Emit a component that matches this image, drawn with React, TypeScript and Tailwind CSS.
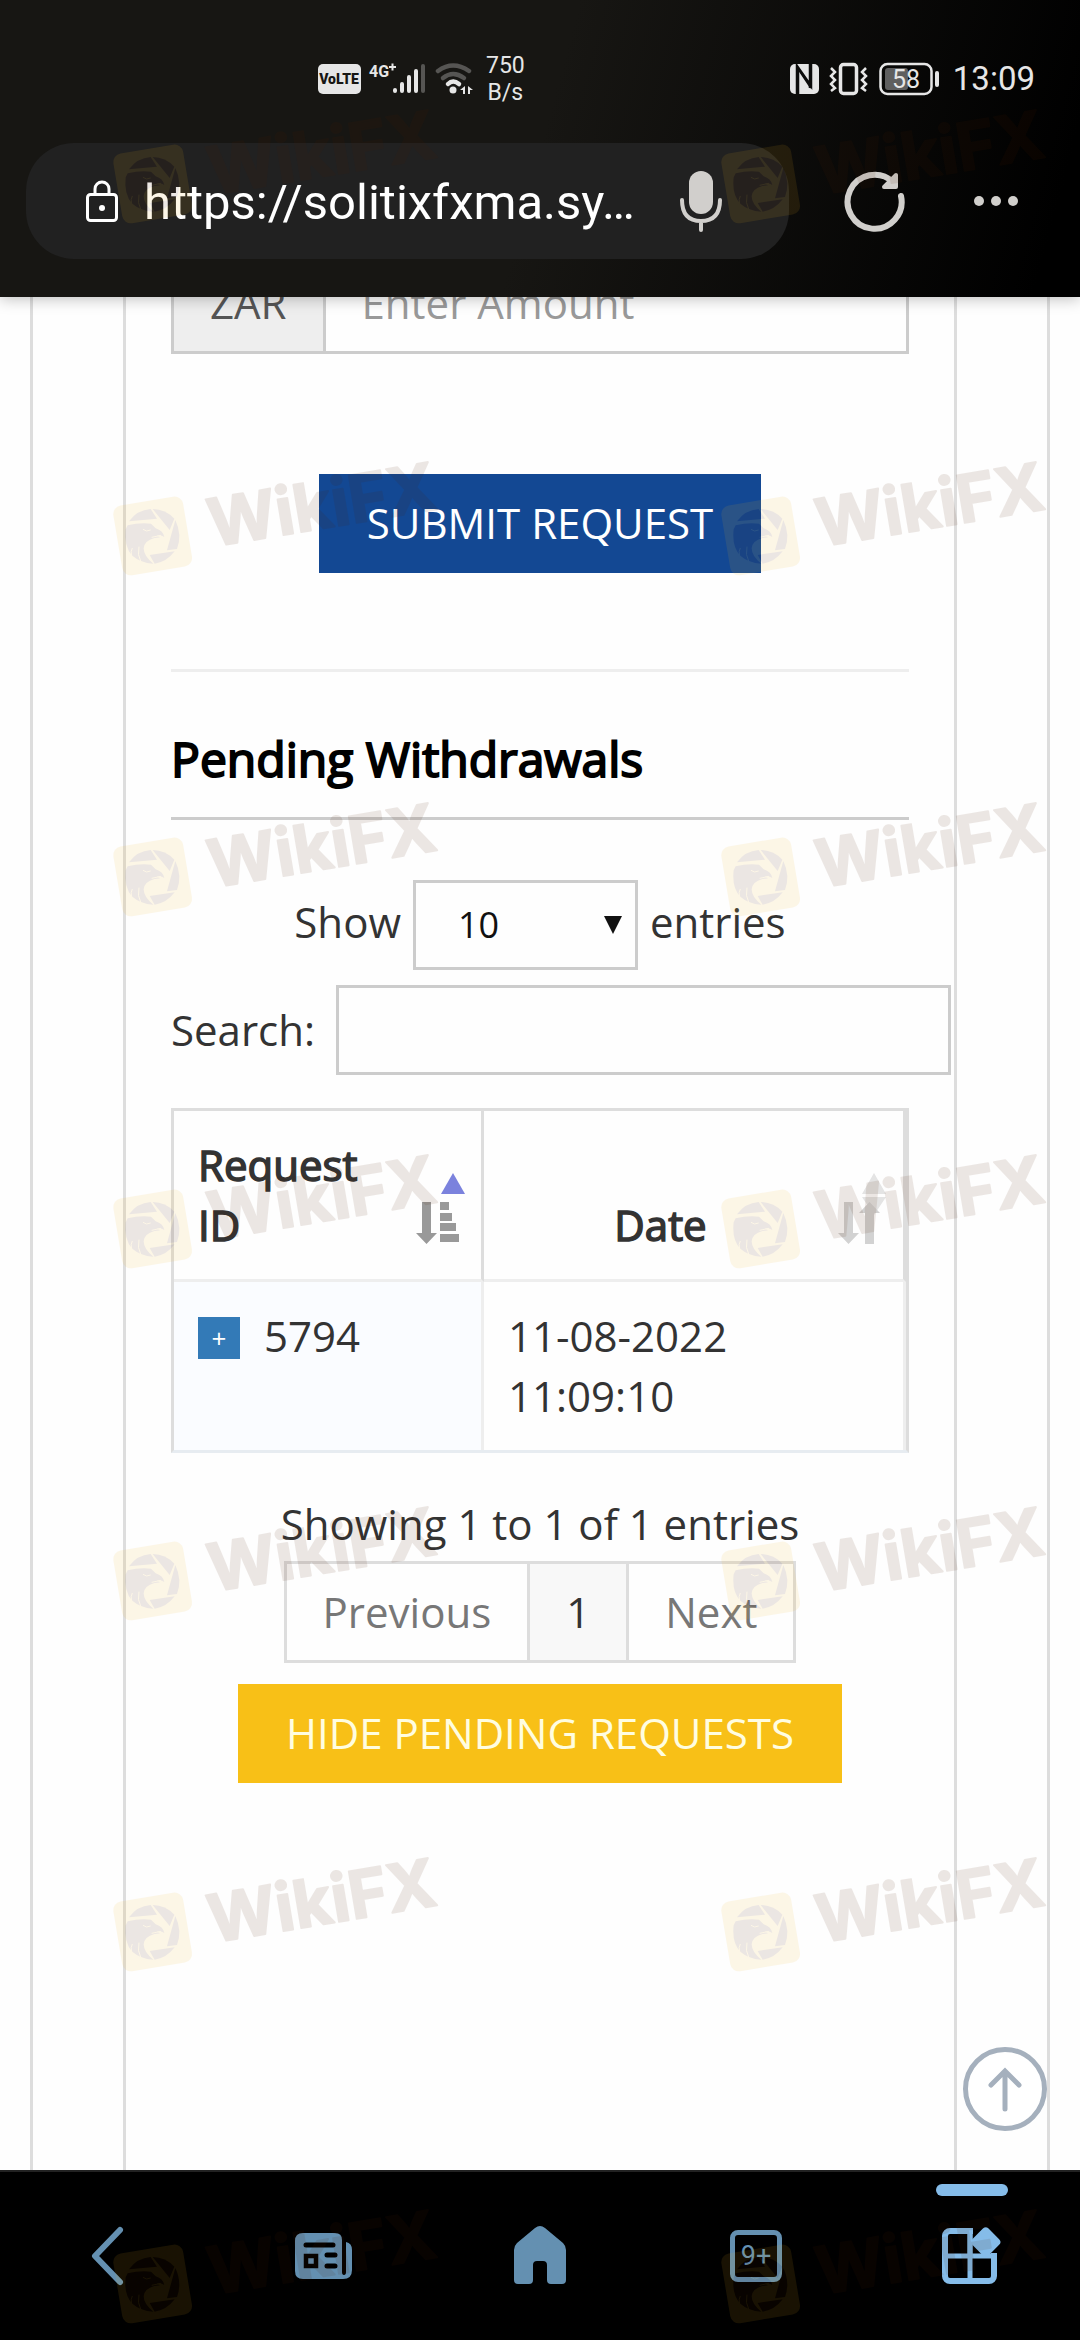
import React, { useState } from "react";

const watermarkRows = [144, 496, 837, 1189, 1541, 1892, 2244];

const Watermark = () => (
	<svg viewBox="0 0 345 130" className="w-[345px] h-[130px] overflow-visible opacity-10" aria-hidden="true">
		<g transform="translate(0 34) scale(0.3333)">
			<rect x="37" y="38" width="212" height="212" rx="26" fill="#f0b41e" transform="rotate(-9.5 143 144)" />
			<g fill="#501e00">
				<path d="M72 100 Q96 66 137 63 L156 92 Z" />
				<path d="M143 63 Q182 64 208 92 L194 126 Z" />
				<path d="M211 96 Q232 140 216 183 L186 187 Z" />
				<path d="M134 201 L209 190 Q185 222 149 227 Z" />
				<path d="M62 124 L68 112 Q104 103 138 107 L152 121 Q174 128 178 147 Q168 139 155 143 L165 148 L148 150 Q118 158 116 181 Q116 204 145 227 Q106 224 82 203 Q56 176 62 124 Z" />
			</g>
			<g fill="none" stroke="#f0b41e" strokeWidth="3">
				<path d="M114 124 Q124 133 137 126" />
				<path d="M102 176 Q96 200 108 222" />
				<path d="M82 180 Q76 190 80 204" />
				<path d="M140 148 L168 142" />
			</g>
		</g>
		<text
			x="107"
			y="93"
			transform="rotate(-9.5 107 93)"
			fill="#501e00"
			stroke="#501e00"
			strokeWidth="2"
			strokeLinejoin="round"
			className="font-[Inter,sans-serif] text-[66px] font-bold"
		>
			WikiFX
		</text>
	</svg>
);

const StatusBar = () => (
	<div className="flex items-center justify-between pl-[318px] pr-[45px] pt-[52px] h-[106px] text-[#e6e6e6] font-[Roboto,sans-serif]">
		<div className="flex items-center">
			<svg viewBox="0 0 156 34" className="w-[156px] h-[34px]">
				<rect x="0" y="2" width="43" height="30" rx="5" fill="#e6e6e6" />
				<text x="21" y="22" textAnchor="middle" fill="#171613" className="text-[14px] font-black">
					VoLTE
				</text>
				<text x="51" y="15" fill="#e6e6e6" className="text-[16px] font-bold">
					4G
				</text>
				<path d="M71 5h7M74.500 1.500v7" stroke="#e6e6e6" strokeWidth="2" />
				<g stroke="#e6e6e6" strokeWidth="4" strokeLinecap="round">
					<path d="M77 28v1M84 22v7M91 15v14M98 9v20" />
					<path d="M105 4v25" stroke="#565553" />
				</g>
				<g fill="none" strokeWidth="4.500" strokeLinecap="round">
					<path d="M120 9q15 -11 31 0" stroke="#565553" />
					<path d="M125 16q10 -8 21 0" stroke="#565553" />
					<path d="M130 22q5 -5 11 0" stroke="#e6e6e6" />
				</g>
				<circle cx="135" cy="28" r="3.500" fill="#e6e6e6" />
				<path d="M142 28l5 -4v8h-2v-4zM155 28l-5 -4v8h2v-4z" fill="#e6e6e6" />
			</svg>
			<div className="ml-3 text-center text-[23px] leading-[27px]">
				<p>750</p>
				<p>B/s</p>
			</div>
		</div>
		<div className="flex items-center">
			<svg viewBox="0 0 152 36" className="w-[152px] h-[36px]">
				<rect x="1" y="3" width="29" height="30" rx="5" fill="#e6e6e6" />
				<path d="M8 33V5l14 20V3M9 9v24M21 3v24" fill="none" stroke="#0d0d0c" strokeWidth="2.500" />
				<path d="M10 9l12 18" stroke="#0d0d0c" strokeWidth="2" />
				<rect x="51.500" y="3.500" width="16" height="29" rx="3" fill="none" stroke="#e6e6e6" strokeWidth="3.500" />
				<path
					d="M42 7l4 4l-4 4l4 4l-4 4l4 4l-4 3M77 7l-4 4l4 4l-4 4l4 4l-4 4l4 3"
					fill="none"
					stroke="#e6e6e6"
					strokeWidth="2.500"
				/>
				<rect x="91.500" y="3" width="51" height="30" rx="7" fill="none" stroke="#e6e6e6" strokeWidth="2.500" />
				<rect x="96" y="7" width="23" height="22" rx="3" fill="#5f5f5f" />
				<text x="117" y="27" textAnchor="middle" fill="#e6e6e6" className="text-[25px]">
					58
				</text>
				<path d="M148 12v12" stroke="#e6e6e6" strokeWidth="4" strokeLinecap="round" />
			</svg>
			<span className="ml-3 text-[33px] leading-[36px]">13:09</span>
		</div>
	</div>
);

const AddressBar = () => (
	<div className="flex items-center pl-[26px] pr-[61px] mt-[37px]">
		<div className="flex min-w-0 flex-1 items-center h-[116px] rounded-[48px] bg-[#212121] pl-[59px] pr-[66px]">
			<svg viewBox="0 0 34 42" className="w-[34px] h-[42px] shrink-0" fill="none" stroke="#fff" strokeWidth="3">
				<rect x="2.500" y="14.500" width="29" height="26" rx="3" />
				<path d="M10 14V9a7 7 0 0 1 14 0v5" />
				<circle cx="17" cy="28" r="3" fill="#fff" stroke="none" />
			</svg>
			<input
				aria-label="Address"
				defaultValue="https://solitixfxma.sy…"
				className="ml-[25px] min-w-0 flex-1 bg-transparent pt-1 text-white text-[49px] leading-[60px] font-[Roboto,sans-serif] outline-none"
			/>
			<button aria-label="Voice search" className="shrink-0">
				<svg viewBox="0 0 44 62" className="w-[44px] h-[62px]">
					<rect x="10" y="1" width="24" height="43" rx="12" fill="#d1cfcc" />
					<path d="M3 30q0 21 19 21t19 -21M22 51v9" fill="none" stroke="#d1cfcc" strokeWidth="4" strokeLinecap="round" />
				</svg>
			</button>
		</div>
		<button aria-label="Reload" className="ml-[55px] shrink-0">
			<svg viewBox="0 0 62 62" className="w-[62px] h-[62px]" fill="none" stroke="#d1cfcc" strokeLinecap="round" strokeLinejoin="round">
				<path d="M57 26a27 27 0 1 1 -8 -14" strokeWidth="6" />
				<path d="M52 5v12H40z" strokeWidth="4" fill="#d1cfcc" />
			</svg>
		</button>
		<button aria-label="More" className="ml-[67px] shrink-0">
			<svg viewBox="0 0 46 12" className="w-[46px] h-[12px]" fill="#d1cfcc">
				<circle cx="6" cy="6" r="5" />
				<circle cx="23" cy="6" r="5" />
				<circle cx="40" cy="6" r="5" />
			</svg>
		</button>
	</div>
);

const PendingTable = () => (
	<div className="mt-[33px] border-[3px] border-[#ddd] border-b-[#e7ecf1]">
		<table className="w-full table-fixed border-separate border-spacing-0">
			<thead>
				<tr className="[-webkit-text-stroke:1.5px]">
					<th className="relative w-[310px] h-[171px] border-r-[3px] border-r-[#ddd] border-b-[3px] border-b-[#eee] py-6 pl-6 pr-[90px] text-left align-bottom font-normal">
						Request ID
						<svg viewBox="0 0 60 80" className="absolute right-2 bottom-7 w-[60px] h-[80px]">
							<path d="M28 23L40 2L52 23z" fill="#7b82dd" />
							<g fill="#999">
								<path d="M9 31h9v31h6l-10.500 11l-10.500 -11h6z" />
								<path d="M27 31h9v8h-9zM27 42h12v8h-12zM27 52h16v8h-16zM27 63h19v8h-19z" />
							</g>
						</svg>
					</th>
					<th className="relative border-r-[3px] border-r-[#ddd] border-b-[3px] border-b-[#eee] py-6 pl-6 pr-[90px] text-center align-bottom font-normal">
						Date
						<svg viewBox="0 0 60 80" className="absolute right-2 bottom-7 w-[60px] h-[80px]">
							<path d="M27 23L39 2L51 23zM27 26h24l-12 18z" fill="#e4e4e4" />
							<g fill="#d2d2d2">
								<path d="M9 31h9v31h6l-10.500 11l-10.500 -11h6z" />
								<path d="M30 73v-31h-6l10.500 -11l10.500 11h-6v31z" />
							</g>
						</svg>
					</th>
				</tr>
			</thead>
			<tbody>
				<tr className="align-top">
					<td className="h-[168px] border-r-[3px] border-[#eee] bg-[#fafcff] py-6 pl-6">
						<div className="flex items-center">
							<button
								aria-label="Expand row"
								className="mt-1 w-[42px] h-[42px] bg-[#337ab7] text-white text-[26px] leading-[42px]"
							>
								+
							</button>
							<span className="ml-6">5794</span>
						</div>
					</td>
					<td className="border-r-[3px] border-[#eee] py-6 pl-6 pr-[90px]">11-08-2022 11:09:10</td>
				</tr>
			</tbody>
		</table>
	</div>
);

const BottomNav = () => (
	<nav className="relative grid grid-cols-5 h-[170px] shrink-0 place-items-center border-t-2 border-[#222] bg-black text-[#6490b1]">
		<button aria-label="Back">
			<svg viewBox="0 0 64 64" className="w-[64px] h-[64px]" fill="none" stroke="currentColor" strokeWidth="6" strokeLinecap="round" strokeLinejoin="round">
				<path d="M44 6L19 32L44 58" />
			</svg>
		</button>
		<button aria-label="News">
			<svg viewBox="0 0 64 64" className="w-[64px] h-[64px]">
				<path d="M11 9h32q7 0 7 7v32q0 3 2 3t2 -3V18q6 1 6 8v20q0 9 -9 9H11q-8 0 -8 -8V17q0 -8 8 -8z" fill="currentColor" />
				<path d="M14 21h27M35 31h8M35 42h8" stroke="#000" strokeWidth="5" strokeLinecap="round" />
				<rect x="14" y="32" width="10" height="10" fill="none" stroke="#000" strokeWidth="4.500" />
			</svg>
		</button>
		<button aria-label="Home">
			<svg viewBox="0 0 64 64" className="w-[64px] h-[64px]" fill="currentColor">
				<path d="M27 4q5 -4 10 0l18 15q3 3 3 7v30q0 4 -4 4H43q-4 0 -4 -4V41q0 -4 -4 -4h-6q-4 0 -4 4v15q0 4 -4 4H10q-4 0 -4 -4V26q0 -4 3 -7z" />
			</svg>
		</button>
		<button aria-label="Tabs" className="w-[52px] h-[52px] rounded-lg border-[5px] border-current text-[27px] leading-[42px] font-[Roboto,sans-serif]">
			9+
		</button>
		<button aria-label="Tools" className="relative text-[#85bce9]">
			<span className="absolute left-1/2 -top-[40px] h-3 w-[72px] -translate-x-1/2 rounded-full bg-current" />
			<svg viewBox="0 0 64 64" className="w-[64px] h-[64px]">
				<rect x="5" y="7" width="49" height="50" rx="5" fill="none" stroke="currentColor" strokeWidth="6" />
				<path d="M30 7v50M5 32h49" stroke="currentColor" strokeWidth="5" />
				<path d="M33 0h31v29H33z" fill="#000" />
				<rect x="34" y="6" width="23" height="23" rx="4" transform="rotate(45 45 18)" fill="currentColor" />
				<path d="M30 7v24" stroke="currentColor" strokeWidth="5" />
			</svg>
		</button>
	</nav>
);

const App = () => {
	const [amount, setAmount] = useState("");
	const [search, setSearch] = useState("");

	return (
		<div className="relative flex flex-col min-h-screen overflow-hidden bg-[#fefefe] text-[#333] text-[42px] leading-[60px] font-['Open_Sans',sans-serif]">
			<header className="relative z-10 h-[297px] shrink-0 bg-[linear-gradient(105deg,#171613_50%,#000_96%)] shadow-[0_2px_14px_rgba(0,0,0,0.25)]">
				<StatusBar />
				<AddressBar />
			</header>

			<main className="relative flex flex-1 flex-col overflow-hidden px-[30px]">
				<div className="flex flex-1 flex-col border-x-[3px] border-[#ddd] px-[90px]">
					<div className="flex-1 border-x-[3px] border-[#ddd] px-[45px]">
						{/* Amount, scrolled partly under the header */}
						<div className="-mt-[45px] flex h-[102px] border-[3px] border-[#ccc]">
							<label htmlFor="amount" className="flex items-center border-r-[3px] border-[#ccc] bg-[#eee] px-9 text-[#555]">
								ZAR
							</label>
							<input
								id="amount"
								value={amount}
								onChange={(e) => setAmount(e.target.value)}
								placeholder="Enter Amount"
								className="min-w-0 flex-1 px-9 outline-none placeholder:text-[#999]"
							/>
						</div>

						<div className="mt-[120px] flex justify-center">
							<button className="h-[99px] bg-[#134893] px-12 pb-[2px] text-white">SUBMIT REQUEST</button>
						</div>

						<hr className="mt-[96px] border-t-[3px] border-[#eee]" />

						{/* Pending withdrawals */}
						<h4 className="mt-[54px] border-b-[3px] border-[#ccc] pb-[25px] text-[48px] leading-[66px] text-black [-webkit-text-stroke:2px]">
							Pending Withdrawals
						</h4>

						<div className="mt-[60px] flex items-baseline justify-center">
							<label htmlFor="length">Show</label>
							<div className="relative mx-3">
								<select
									id="length"
									className="block h-[90px] w-[225px] appearance-none border-[3px] border-[#ccc] pl-[42px] text-[36px] text-[#111] outline-none"
								>
									<option>10</option>
									<option>25</option>
									<option>50</option>
								</select>
								<svg viewBox="0 0 18 18" className="pointer-events-none absolute right-4 top-[36px] w-[18px] h-[18px]" fill="#111">
									<path d="M0 0h18L9 18z" />
								</svg>
							</div>
							<span>entries</span>
						</div>

						<div className="mt-[15px] -mr-[42px] flex items-center">
							<label htmlFor="search">Search:</label>
							<input
								id="search"
								value={search}
								onChange={(e) => setSearch(e.target.value)}
								className="ml-[21px] h-[90px] min-w-0 flex-1 border-[3px] border-[#ccc] px-9 outline-none"
							/>
						</div>

						<PendingTable />

						<p className="mt-[41px] text-center">Showing 1 to 1 of 1 entries</p>
						<div className="mt-[7px] flex justify-center">
							<button className="h-[102px] border-[3px] border-[#ddd] px-9 text-[#777]">Previous</button>
							<button className="-ml-[3px] h-[102px] border-[3px] border-[#ddd] bg-[#f8f8f8] px-9">1</button>
							<button className="-ml-[3px] h-[102px] border-[3px] border-[#ddd] px-9 text-[#777]">Next</button>
						</div>

						<div className="mt-[21px] flex justify-center">
							<button className="h-[99px] bg-[#f8c017] px-12 pb-[2px] text-[#fffde0]">HIDE PENDING REQUESTS</button>
						</div>
					</div>
				</div>

				<button aria-label="Scroll to top" className="absolute bottom-[38px] right-[32px]">
					<svg viewBox="0 0 86 86" className="w-[86px] h-[86px]" fill="none" stroke="#a5b0bd" strokeWidth="5" strokeLinecap="round">
						<circle cx="43" cy="43" r="39.500" fill="#fff" />
						<path d="M43 63V26M29 39L43 25L57 39" />
					</svg>
				</button>
			</main>

			<BottomNav />

			{/* Watermark layer */}
			<div className="pointer-events-none absolute inset-0 z-20 overflow-hidden">
				{watermarkRows.map((top) => (
					<div key={top} className="absolute left-[105px] flex gap-[263px]" style={{ top: top - 42 }}>
						<Watermark />
						<Watermark />
					</div>
				))}
			</div>
		</div>
	);
};

export default App;
